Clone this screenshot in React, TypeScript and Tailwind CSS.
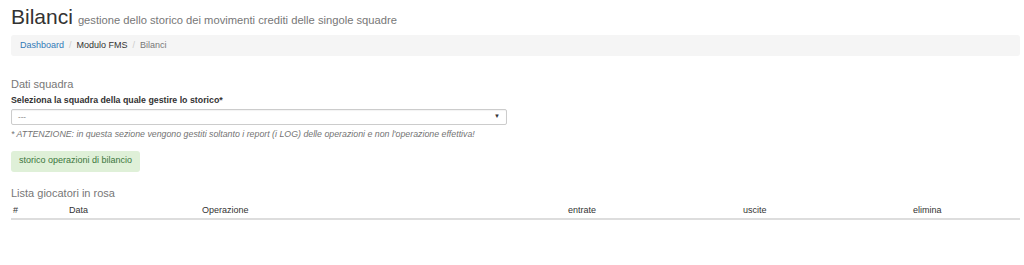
export default function App() {
  const cols = [
    { label: '#', w: 'w-[56px]' },
    { label: 'Data', w: 'w-[133px]' },
    { label: 'Operazione', w: 'w-[366px]' },
    { label: 'entrate', w: 'w-[175px]' },
    { label: 'uscite', w: 'w-[170px]' },
    { label: 'elimina', w: 'flex-1' },
  ];

  return (
    <div className="min-h-[265px] bg-white pl-[11px] pr-[4px] font-['Liberation_Sans',Arial,sans-serif] text-[#333]">
      {/* Page header */}
      <h1 className="pt-[6px] flex items-baseline gap-[5px] leading-none">
        <span className="text-[21px] text-[#333]">Bilanci</span>
        <span className="text-[11.2px] text-[#777]">gestione dello storico dei movimenti crediti delle singole squadre</span>
      </h1>

      {/* Breadcrumb */}
      <div className="mt-[8px] h-[21px] rounded-[3px] bg-[#f5f5f5] px-[9px] flex items-center text-[9px]">
        <span className="text-[#337ab7]">Dashboard</span>
        <span className="px-[5px] text-[#ccc]">/</span>
        <span className="text-[#333]">Modulo FMS</span>
        <span className="px-[5px] text-[#ccc]">/</span>
        <span className="text-[#777]">Bilanci</span>
      </div>

      {/* Dati squadra */}
      <h3 className="mt-[23px] text-[11px] leading-none text-[#777]">Dati squadra</h3>
      <label className="mt-[6px] block text-[8.8px] font-bold leading-none text-[#333]">
        Seleziona la squadra della quale gestire lo storico*
      </label>
      <div className="mt-[4px] w-[496px] h-[16px] rounded-[2px] border border-[#ccc] bg-white flex items-center justify-between px-[6px] shadow-[inset_0_1px_1px_rgba(0,0,0,0.05)]">
        <span className="text-[8px] text-[#777]">---</span>
        <span className="text-[6px] text-[#333]">▼</span>
      </div>
      <p className="mt-[5px] text-[8.8px] italic leading-none text-[#737373]">
        * ATTENZIONE: in questa sezione vengono gestiti soltanto i report (i LOG) delle operazioni e non l'operazione effettiva!
      </p>

      <button className="mt-[12px] h-[21px] w-[129px] rounded-[3px] bg-[#dff0d8] text-[9px] text-[#3c763d]">
        storico operazioni di bilancio
      </button>

      {/* Lista giocatori */}
      <h3 className="mt-[16px] text-[11px] leading-none text-[#777]">Lista giocatori in rosa</h3>
      <div className="mt-[5px] flex border-b-2 border-[#ddd] pb-[1px] text-[9px] text-[#333]">
        {cols.map((c) => (
          <div key={c.label} className={`${c.w} pl-[2px]`}>
            {c.label}
          </div>
        ))}
      </div>
    </div>
  );
}
